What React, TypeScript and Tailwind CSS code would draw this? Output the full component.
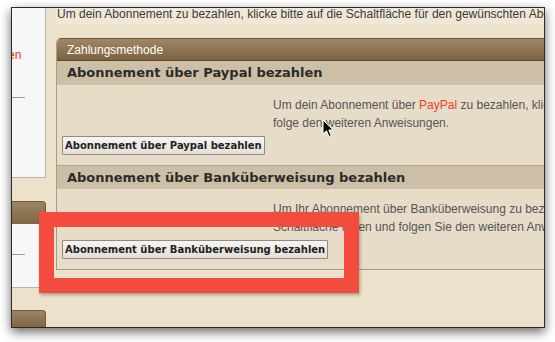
import React from "react";

const sans = { fontFamily: '"Liberation Sans", Arial, sans-serif' };
const bold = { fontFamily: '"DejaVu Sans", Verdana, sans-serif' };

function Btn({ children }: { children: React.ReactNode }) {
  return (
    <div
      className="flex h-[19px] items-center border border-[#8e8b86] bg-gradient-to-b from-[#f7f5f1] to-[#e4e0d8] px-[2px] text-[10px] font-bold leading-none text-[#222] rounded-[1px]"
      style={bold}
    >
      {children}
    </div>
  );
}

export default function App() {
  return (
    <div className="relative h-[342px] w-[555px] overflow-hidden bg-white">
      <div className="ml-[11px] mt-[7px] h-[321px] w-[534px] border border-[#2a2a2a] shadow-[0_4px_10px_rgba(0,0,0,0.6)]">
        <div className="flex h-full w-full overflow-hidden bg-[#ece2cb]">
          {/* sidebar */}
          <div className="flex w-[34px] shrink-0 flex-col">
            <div className="relative h-[170px] overflow-hidden border-b border-r border-[#b9b4ab] bg-[#f7f7f7]">
              <div className="absolute left-[-4px] top-[40px] text-[12px] leading-[14px] text-[#e8321c]" style={sans}>
                en
              </div>
              <div className="absolute left-0 top-[89px] h-px w-[13px] bg-[#9a9a9a]" />
            </div>
            <div className="h-[23px]" />
            <div className="h-[23px] rounded-tr-[4px] border-r border-t border-[#6d5a40] bg-gradient-to-b from-[#9d8462] to-[#7f6646]" />
            <div className="relative h-[64px] border-b border-r border-[#b9b4ab] bg-[#f7f7f7]">
              <div className="absolute left-0 top-[30px] h-px w-[13px] bg-[#9a9a9a]" />
            </div>
            <div className="h-[22px]" />
            <div className="flex-1 rounded-tr-[4px] border-r border-t border-[#6d5a40] bg-gradient-to-b from-[#9d8462] to-[#7f6646]" />
          </div>

          {/* main */}
          <div className="min-w-0 flex-1 pl-[10px]">
            <div
              className="h-[16px] overflow-hidden whitespace-nowrap bg-[#f0e8d7] pl-px text-[12px] leading-[12px] text-[#3a3a3a]"
              style={sans}
            >
              Um dein Abonnement zu bezahlen, klicke bitte auf die Schaltfläche für den gewünschten Abonnement-Typ.
            </div>
            <div className="h-[14px]" />
            <div className="overflow-hidden rounded-tl-[5px] border-b border-l border-[#a99b89]">
              <div
                className="flex h-[23px] items-center border-b border-t border-b-[#5e4a33] border-t-[#6b563b] bg-gradient-to-b from-[#a08765] to-[#7b6243] pl-[10px] text-[12px] text-white"
                style={sans}
              >
                Zahlungsmethode
              </div>
              <div
                className="flex h-[24px] items-center bg-[#cdbfa6] pl-[10px] text-[13px] font-bold text-[#2b2b2b]"
                style={bold}
              >
                Abonnement über Paypal bezahlen
              </div>
              <div className="h-[80px] bg-[#e6dcc8] pl-[5px] pt-[11px]">
                <div className="ml-[211px] whitespace-nowrap text-[12px] leading-[18px] text-[#555]" style={sans}>
                  <div>
                    Um dein Abonnement über <span className="text-[#e8451d]">PayPal</span> zu bezahlen, klicke bitte auf die
                  </div>
                  <div>folge den weiteren Anweisungen.</div>
                </div>
                <div className="mt-[4px] flex">
                  <Btn>Abonnement über Paypal bezahlen</Btn>
                </div>
              </div>
              <div
                className="flex h-[24px] items-center border-t border-[#b3a694] bg-[#cdbfa6] pl-[10px] text-[13px] font-bold text-[#2b2b2b]"
                style={bold}
              >
                Abonnement über Banküberweisung bezahlen
              </div>
              <div className="h-[80px] bg-[#e6dcc8] pl-[5px] pt-[11px]">
                <div className="ml-[211px] whitespace-nowrap text-[12px] leading-[18px] text-[#555]" style={sans}>
                  <div>Um Ihr Abonnement über Banküberweisung zu bezahlen, klicke bitte die</div>
                  <div>Schaltfläche unten und folgen Sie den weiteren Anweisungen.</div>
                </div>
                <div className="mt-[4px] flex">
                  <Btn>Abonnement über Banküberweisung bezahlen</Btn>
                </div>
              </div>
            </div>
          </div>
        </div>
      </div>

      {/* mouse cursor */}
      <svg className="absolute left-[322px] top-[119px]" width="13" height="19" viewBox="0 0 13 19">
        <path
          d="M1 1 L1 15 L4.5 11.8 L7 17.5 L9.2 16.5 L6.8 11 L11.2 11 Z"
          fill="#000"
          stroke="#fff"
          strokeWidth="1"
          strokeLinejoin="round"
        />
      </svg>

      {/* red annotation */}
      <div className="absolute left-[39px] top-[212px] h-[81px] w-[320px] border-[15px] border-[#f44b3f] shadow-[1px_2px_3px_rgba(0,0,0,0.3)]" />
    </div>
  );
}
